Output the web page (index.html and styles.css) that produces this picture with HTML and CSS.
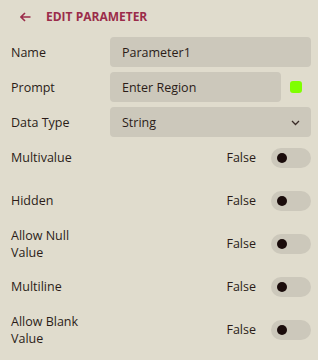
FILE: index.html
```html
<!DOCTYPE html>
<html>
<head>
<meta charset="utf-8">
<link rel="stylesheet" href="styles.css">
</head>
<body>
<div class="panel">
  <div class="header">
    <svg class="back" width="11" height="10" viewBox="0 0 11 10"><path d="M5 1 L1 5 L5 9 M1 5 H10.5" fill="none" stroke="#9b2c4a" stroke-width="1.6"/></svg>
    <span class="title">EDIT PARAMETER</span>
  </div>
  <div class="form">
    <div class="field">
      <span class="label">Name</span>
      <div class="input">Parameter1</div>
    </div>
    <div class="field">
      <span class="label">Prompt</span>
      <div class="prompt-wrap">
        <div class="input">Enter Region</div>
        <span class="swatch"></span>
      </div>
    </div>
    <div class="field">
      <span class="label">Data Type</span>
      <div class="input select">String
        <svg class="chev" width="9" height="6" viewBox="0 0 9 6"><path d="M1 1 L4.5 4.5 L8 1" fill="none" stroke="#3a2c28" stroke-width="1.3"/></svg>
      </div>
    </div>
    <div class="toggles">
      <div class="trow"><span class="tlabel">Multivalue</span><span class="val">False</span><span class="switch"><span class="knob"></span></span></div>
      <div class="trow"><span class="tlabel">Hidden</span><span class="val">False</span><span class="switch"><span class="knob"></span></span></div>
      <div class="trow"><span class="tlabel">Allow Null Value</span><span class="val">False</span><span class="switch"><span class="knob"></span></span></div>
      <div class="trow"><span class="tlabel">Multiline</span><span class="val">False</span><span class="switch"><span class="knob"></span></span></div>
      <div class="trow"><span class="tlabel">Allow Blank Value</span><span class="val">False</span><span class="switch"><span class="knob"></span></span></div>
    </div>
  </div>
</div>
</body>
</html>
```
FILE: styles.css
```css
html, body {
  margin: 0;
  padding: 0;
  background: #e0dccd;
}
body {
  font-family: "Open Sans", sans-serif;
  font-size: 12.5px;
  color: #2b1c18;
  width: 318px;
  height: 360px;
  overflow: hidden;
}
.header {
  display: flex;
  align-items: center;
  height: 33px;
  padding-left: 20px;
}
.back {
  display: block;
  margin-right: 15px;
}
.title {
  font-weight: 700;
  font-size: 12px;
  color: #9b2c4a;
  letter-spacing: 0;
}
.form {
  display: flex;
  flex-direction: column;
  gap: 5px;
  padding: 4px 7px 0 11px;
}
.field {
  display: grid;
  grid-template-columns: 99px 1fr;
  align-items: center;
}
.input {
  height: 30px;
  background: #ccc8bb;
  border-radius: 4px;
  display: flex;
  align-items: center;
  padding: 0 12px;
  box-sizing: border-box;
}
.prompt-wrap {
  display: flex;
  align-items: center;
}
.prompt-wrap .input {
  width: 171px;
}
.swatch {
  width: 12px;
  height: 12px;
  border-radius: 3px;
  background: #7fff00;
  margin-left: 9px;
}
.select {
  justify-content: space-between;
  padding-right: 11px;
}
.chev {
  display: block;
  margin-top: 1px;
}
.toggles {
  display: flex;
  flex-direction: column;
  margin-top: -6px;
}
.trow {
  height: 43px;
  display: flex;
  align-items: center;
}
.tlabel {
  width: 72px;
  line-height: 17px;
  flex: none;
}
.val {
  margin-left: auto;
  margin-right: 15px;
}
.switch {
  width: 40px;
  height: 20px;
  border-radius: 10px;
  background: #ccc8bb;
  display: flex;
  align-items: center;
  padding-left: 6px;
  box-sizing: border-box;
}
.knob {
  width: 10px;
  height: 10px;
  border-radius: 50%;
  background: #1a0c0b;
}
```
